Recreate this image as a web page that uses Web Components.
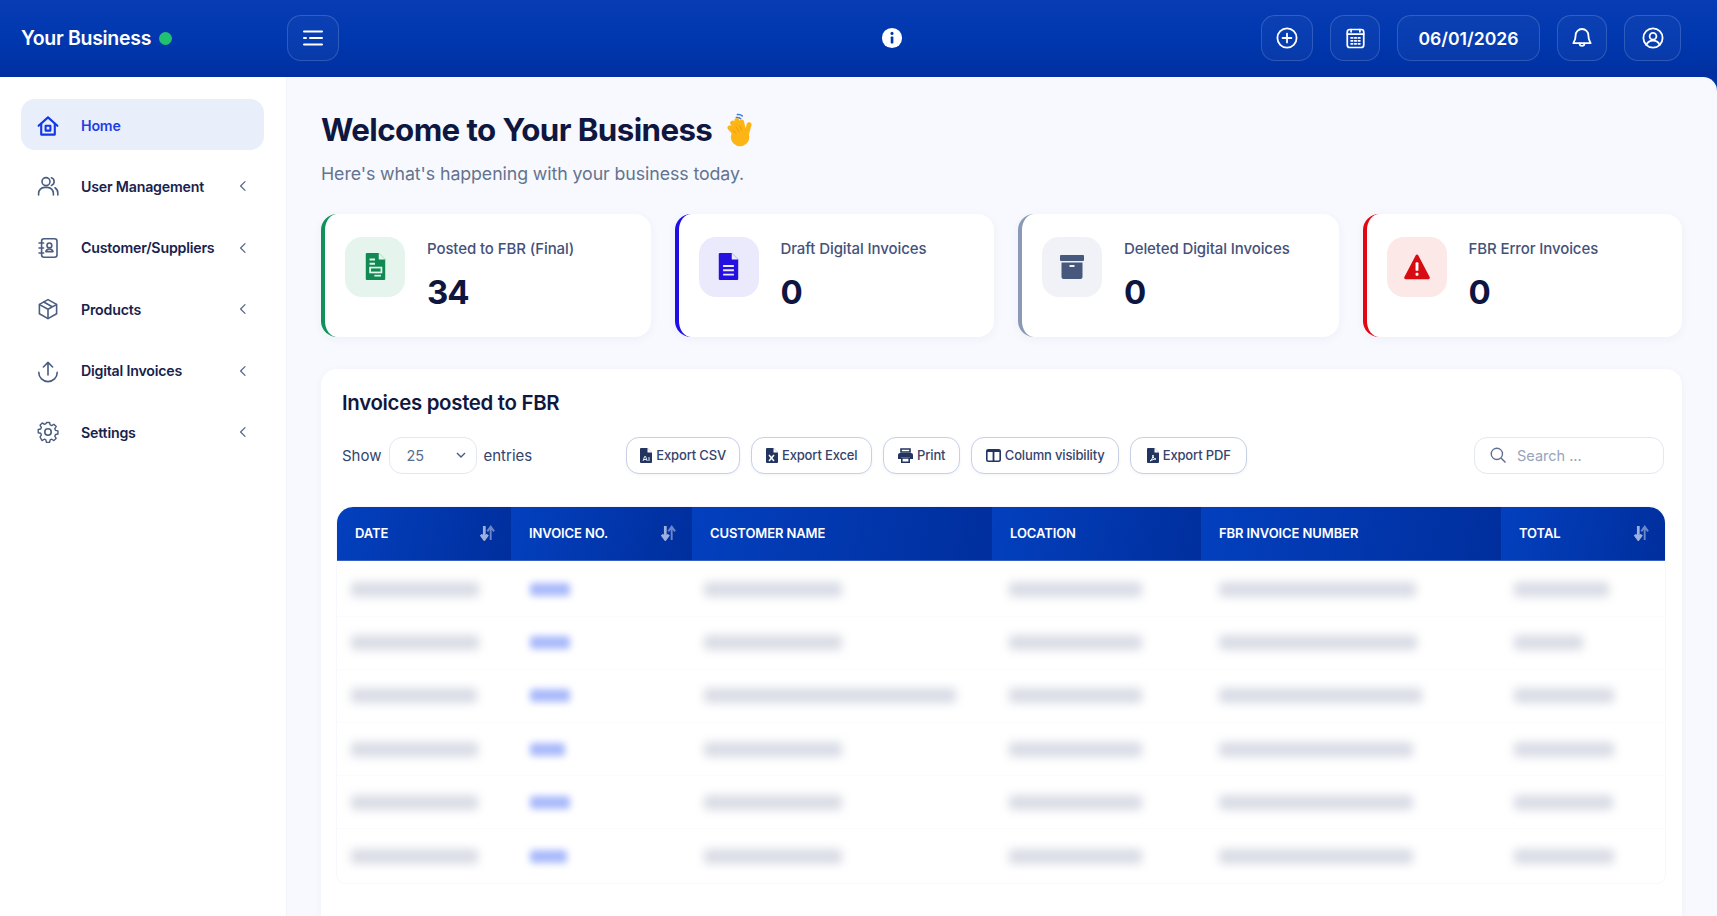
<!doctype html>
<html>
<head>
<meta charset="utf-8">
<title>Your Business</title>
<style>
  html, body { margin: 0; height: 100%; overflow: hidden; background: #fff; }
  body { font-family: "Inter", "Liberation Sans", sans-serif; color: #111a44; }
  app-shell { height: 916px; }
</style>
</head>
<body>
<app-shell>
  <app-header slot="header"></app-header>
  <side-nav slot="nav">
    <nav-item icon="home" active>Home</nav-item>
    <nav-item icon="users" more>User Management</nav-item>
    <nav-item icon="book" more>Customer/Suppliers</nav-item>
    <nav-item icon="box" more>Products</nav-item>
    <nav-item icon="upload" more>Digital Invoices</nav-item>
    <nav-item icon="gear" more>Settings</nav-item>
  </side-nav>
  <welcome-head></welcome-head>
  <stat-row>
    <stat-card kind="green" label="Posted to FBR (Final)" value="34"></stat-card>
    <stat-card kind="blue" label="Draft Digital Invoices" value="0"></stat-card>
    <stat-card kind="slate" label="Deleted Digital Invoices" value="0"></stat-card>
    <stat-card kind="red" label="FBR Error Invoices" value="0"></stat-card>
  </stat-row>
  <invoice-panel></invoice-panel>
</app-shell>

<script>
const ICONS = {
  home: '<path d="M2.6 11.8 12 3.4l9.4 8.4"/><path d="M5.2 9.8V20.6h13.600V9.800"/><rect x="9.600" y="11.800" width="4.800" height="4.800"/>',
  users: '<circle cx="10" cy="7.600" r="4"/><path d="M2.600 21v-1.600a6 6 0 0 1 6-6h2.800a6 6 0 0 1 6 6V21"/><path d="M15.400 3.800a4 4 0 0 1 0 7.600"/><path d="M19 13.800a6 6 0 0 1 2.800 5.200V21"/>',
  book: '<rect x="5.600" y="2.800" width="15.400" height="18.400" rx="2.400"/><path d="M3 7h4.600M3 12h4.600M3 17h4.600"/><circle cx="13.400" cy="9.400" r="2.400"/><path d="M9.800 15.600c.6-1.800 2-2.600 3.600-2.600s3 .8 3.600 2.600z"/>',
  box: '<path d="M12 2.600 20.600 7.400v9.400L12 21.600 3.400 16.800V7.400z"/><path d="M3.600 7.600 12 12.200l8.400-4.600M12 12.200v9.200M7.800 5l8.400 4.800"/>',
  upload: '<path d="M12 16V3.400M7.400 8 12 3.400 16.600 8"/><path d="M2.800 13.400a9.200 9.200 0 0 0 18.400 0"/>',
  gear: '<circle cx="12" cy="12" r="3.200"/><path d="M10.200 2.600h3.600l.6 2.800 1.900.8 2.400-1.600 2.600 2.600-1.600 2.400.8 1.900 2.800.6v3.600l-2.800.6-.8 1.900 1.600 2.400-2.600 2.600-2.400-1.600-1.900.8-.6 2.800h-3.600l-.6-2.800-1.900-.8-2.400 1.600L2.900 19.100l1.600-2.400-.8-1.900-2.800-.6v-3.600l2.800-.6.8-1.900-1.600-2.400 2.600-2.600 2.400 1.600 1.900-.8z" transform="translate(12 12) scale(.88) translate(-12 -13.400)"/>',
  menu: '<path d="M3 5.400h18M9 12h12M3 18.600h18M3 12h2"/>',
  plus: '<circle cx="12" cy="12" r="9.600"/><path d="M12 7.600v8.800M7.600 12h8.800"/>',
  calc: '<rect x="3.400" y="2.600" width="17.200" height="18.800" rx="2.600"/><path d="M3.400 7.400h17.200" /><path d="M7.400 11.400h1.600M11.200 11.400h1.600M15 11.400h1.600M7.400 14.400h1.600M11.200 14.400h1.600M15 14.400h1.600M7.400 17.600h1.600M11.200 17.600h1.600M15 17.600h1.600" stroke-width="1.800"/><path d="M7.400 2.600V5M16.600 2.600V5"/>',
  bell: '<path d="M12 3a6.400 6.400 0 0 0-6.400 6.400c0 5.200-2.200 7-2.200 7.800h17.200c0-.8-2.200-2.600-2.200-7.800A6.400 6.400 0 0 0 12 3z"/><path d="M9.600 17.400a2.400 2.400 0 0 0 4.800 0"/>',
  user: '<circle cx="12" cy="12" r="9.600"/><circle cx="12" cy="10.200" r="3.400"/><path d="M5.400 19c1-3 3.600-4.400 6.600-4.400s5.600 1.400 6.600 4.400"/>',
  chev: '<path d="M15 5.400 8.400 12l6.600 6.600"/>'
};
const svg = (name, size, width = 1.8) =>
  `<svg width="${size}" height="${size}" viewBox="0 0 24 24" fill="none" stroke="currentColor" stroke-width="${width}" stroke-linecap="round" stroke-linejoin="round">${ICONS[name]}</svg>`;

customElements.define('app-shell', class extends HTMLElement {
  constructor() {
    super();
    this.attachShadow({ mode: 'open' }).innerHTML = `<style>
      :host { display: grid; grid-template: 77px 1fr / 286px 1fr; background: #0032a4; }
      .head { grid-column: 1 / 3; }
      .nav { background: #fff; min-height: 0; }
      main { background: #f7f9fe; padding: 35px 35px 0 34px; border-top-right-radius: 14px; border-left: 1px solid #f0f3fa; overflow: hidden; min-height: 0; box-sizing: border-box; }
    </style>
    <div class="head"><slot name="header"></slot></div>
    <div class="nav"><slot name="nav"></slot></div>
    <main><slot></slot></main>`;
  }
});

customElements.define('head-button', class extends HTMLElement {
  constructor() {
    super();
    this.attachShadow({ mode: 'open' }).innerHTML = `<style>
      :host { display: flex; align-items: center; justify-content: center; height: 46px; box-sizing: border-box;
        border: 1px solid rgba(255,255,255,.16); border-radius: 14px; background: rgba(255,255,255,.03);
        color: #fff; font-size: 17.600px; font-weight: 600; }
    </style><slot></slot>`;
  }
});

customElements.define('app-header', class extends HTMLElement {
  constructor() {
    super();
    this.attachShadow({ mode: 'open' }).innerHTML = `<style>
      :host { display: flex; align-items: center; height: 77px; box-sizing: border-box;
        background: linear-gradient(180deg,#073cb4 0%,#0037ae 55%,#0030a0 100%); color: #fff; padding: 0 36px 1px 21px; }
      .brand { display: flex; align-items: center; width: 266px; font-size: 19.500px; font-weight: 600; letter-spacing: -.3px; }
      .dot { width: 13px; height: 13px; border-radius: 50%; background: #22c16f; margin-left: 8px; }
      .mid { flex: 1; display: flex; justify-content: center; padding-left: 184px; }
      .right { display: flex; gap: 17px; }
    </style>
    <div class="brand">Your Business<span class="dot"></span></div>
    <head-button style="width:52px">${svg('menu', 24, 2)}</head-button>
    <div class="mid"><svg width="22" height="22" viewBox="0 0 24 24"><circle cx="12" cy="12" r="11" fill="#fff"/><rect x="10.600" y="10.400" width="2.900" height="7.600" rx=".8" fill="#0037af"/><circle cx="12" cy="7" r="1.700" fill="#0037af"/></svg></div>
    <div class="right">
      <head-button style="width:52px">${svg('plus', 24)}</head-button>
      <head-button style="width:50px">${svg('calc', 23)}</head-button>
      <head-button style="width:143px">06/01/2026</head-button>
      <head-button style="width:50px">${svg('bell', 24)}</head-button>
      <head-button style="width:57px">${svg('user', 24)}</head-button>
    </div>`;
  }
});

customElements.define('side-nav', class extends HTMLElement {
  constructor() {
    super();
    this.attachShadow({ mode: 'open' }).innerHTML = `<style>
      :host { display: flex; flex-direction: column; gap: 10.600px; padding: 22px 22px 0 21px; }
    </style><slot></slot>`;
  }
});

customElements.define('nav-item', class extends HTMLElement {
  constructor() {
    super();
    const active = this.hasAttribute('active');
    this.attachShadow({ mode: 'open' }).innerHTML = `<style>
      :host { display: flex; align-items: center; height: 51px; box-sizing: border-box; border-radius: 14px; padding: 0 13px 0 15px;
        font-size: 14.200px; font-weight: 600; letter-spacing: -.2px; color: #17224d; }
      :host([active]) { background: #e9eefb; color: #1c3fe6; padding-top: 2px; }
      .ico { display: flex; width: 24px; margin-right: 21px; color: #4a5c80; }
      :host([active]) .ico { color: #1337e8; }
      .txt { flex: 1; }
      .chev { display: flex; color: #5a6c8e; }
    </style>
    <span class="ico">${svg(this.getAttribute('icon'), 24, active ? 2.1 : 1.6)}</span>
    <span class="txt"><slot></slot></span>
    ${this.hasAttribute('more') ? `<span class="chev">${svg('chev', 16, 2)}</span>` : ''}`;
  }
});

customElements.define('welcome-head', class extends HTMLElement {
  constructor() {
    super();
    this.attachShadow({ mode: 'open' }).innerHTML = `<style>
      :host { display: block; }
      h1 { margin: 0; font-size: 31.300px; line-height: 36px; font-weight: 700; letter-spacing: -.6px; color: #0f1740; display: flex; align-items: center; gap: 14px; }
      p { margin: 12.500px 0 0; font-size: 17.800px; line-height: 26px; color: #64738f; font-weight: 400; letter-spacing: -.1px; }
    </style>
    <h1>Welcome to Your Business
      <svg width="26" height="34" viewBox="0 0 24 32" fill="none" stroke-linecap="round">
        <path d="M10.500 1.500a5 5 0 0 1 4.500 1.200M9.500 4.300a5 5 0 0 1 4 1" stroke="#3f7fe8" stroke-width="1.500"/>
        <g stroke="#fdb515" stroke-width="4.600"><path d="M9 20 3.500 14M10.500 17 6 9.500M13 15.500 10 7M16 15.500 14.500 8.500M18.500 22 21.500 11"/></g>
        <circle cx="13" cy="22.500" r="8.700" fill="#fdb515"/>
        <path d="M6.500 16.500 9 19M9.500 13.500l2.500 4M13 12l1.500 4" stroke="#e8960b" stroke-width=".8"/>
      </svg>
    </h1>
    <p>Here's what's happening with your business today.</p>`;
  }
});

customElements.define('stat-row', class extends HTMLElement {
  constructor() {
    super();
    this.attachShadow({ mode: 'open' }).innerHTML = `<style>
      :host { display: grid; grid-template-columns: 329fr 319fr 320fr 319fr; gap: 24px; margin-top: 27px; }
    </style><slot></slot>`;
  }
});

const STAT = {
  green: { c: '#0f9158', bg: '#e5f5ee', w: 21, h: 27, vb: '3 2 18 25', i: '<path d="M4 2h11l6 6v18a1 1 0 0 1-1 1H4a1 1 0 0 1-1-1V3a1 1 0 0 1 1-1z" fill="#0f8a52"/><path d="M15 2v6h6" fill="#e5f5ee"/><path d="M6.500 8h5M6.500 12h5" stroke="#e5f5ee" stroke-width="1.800"/><rect x="7" y="15.500" width="10.500" height="4.500" fill="none" stroke="#e5f5ee" stroke-width="1.600"/><path d="M11 23h6" stroke="#e5f5ee" stroke-width="1.600"/>' },
  blue: { c: '#1f0fe6', bg: '#ebeafc', w: 21, h: 27, vb: '3 2 18 25', i: '<path d="M4 2h11l6 6v18a1 1 0 0 1-1 1H4a1 1 0 0 1-1-1V3a1 1 0 0 1 1-1z" fill="#2410e0"/><path d="M15 2v6h6" fill="#ebeafc"/><path d="M7 14h10M7 18h10M7 22h10" stroke="#ebeafc" stroke-width="1.800"/>' },
  slate: { c: '#8a9ab5', bg: '#f0f2f7', w: 26, h: 24, vb: '0 3 24 24', i: '<rect x="0" y="3" width="24" height="6" rx="1" fill="#46587c"/><path d="M1.500 10.500h21V25a2 2 0 0 1-2 2h-17a2 2 0 0 1-2-2z" fill="#46587c"/><rect x="9.500" y="13" width="5" height="2" fill="#f0f2f7"/>' },
  red: { c: '#e30613', bg: '#fde8e8', w: 28, h: 26, vb: '0 1 27 27', i: '<path d="M13.500 1.500a1.500 1.500 0 0 1 1.300.8L26.600 24.800a1.600 1.600 0 0 1-1.400 2.400H1.800a1.600 1.600 0 0 1-1.400-2.400L12.200 2.300a1.500 1.500 0 0 1 1.300-.8z" fill="#d80a12"/><rect x="12" y="9.500" width="3" height="9" rx="1" fill="#fff"/><rect x="12" y="20.500" width="3" height="3" rx="1" fill="#fff"/>' }
};

customElements.define('stat-card', class extends HTMLElement {
  constructor() {
    super();
    const s = STAT[this.getAttribute('kind')];
    this.attachShadow({ mode: 'open' }).innerHTML = `<style>
      :host { display: flex; height: 123px; box-sizing: border-box; background: #fff; border-radius: 16px;
        border-left: 4px solid ${s.c}; padding: 23px 20px 0 20px; gap: 22px; box-shadow: 0 2px 10px rgba(40,60,120,.05); }
      .box { width: 60px; height: 60px; border-radius: 17px; background: ${s.bg}; display: flex; align-items: center; justify-content: center; }
      .lbl { font-size: 15px; line-height: 20px; font-weight: 500; color: #44527a; margin-top: 2px; letter-spacing: -.1px; }
      .val { font-size: 33px; line-height: 42px; font-weight: 700; color: #0e1640; margin-top: 12px; letter-spacing: -1px; }
    </style>
    <div class="box"><svg width="${s.w}" height="${s.h}" viewBox="${s.vb}">${s.i}</svg></div>
    <div><div class="lbl">${this.getAttribute('label')}</div><div class="val">${this.getAttribute('value')}</div></div>`;
  }
});

customElements.define('tool-button', class extends HTMLElement {
  constructor() {
    super();
    this.attachShadow({ mode: 'open' }).innerHTML = `<style>
      :host { display: flex; align-items: center; justify-content: center; gap: 4px; height: 37px; box-sizing: border-box;
        border: 1px solid #c7d0e4; border-radius: 13px; background: #fff; font-size: 13px; font-weight: 500; color: #34446c;
        box-shadow: 0 1px 3px rgba(40,60,120,.06); letter-spacing: -.15px; }
    </style>
    <slot name="icon"></slot><slot></slot>`;
  }
});

// the row data in the reference is blurred out, so it is drawn as smears and not as text
const ROWS = [
  [128, 40, 138, 133, 197, 95],
  [128, 40, 138, 133, 198, 69],
  [126, 40, 252, 133, 203, 100],
  [127, 35, 138, 133, 194, 100],
  [127, 40, 138, 133, 194, 99],
  [127, 37, 138, 133, 194, 100]
];
const COLS = [
  { w: 174, name: 'DATE', sort: 1, pad: 14 },
  { w: 181, name: 'INVOICE NO.', sort: 1, pad: 19 },
  { w: 300, name: 'CUSTOMER NAME', pad: 12 },
  { w: 209, name: 'LOCATION', pad: 17 },
  { w: 300, name: 'FBR INVOICE NUMBER', pad: 18 },
  { w: 164, name: 'TOTAL', sort: 1, pad: 13 }
];
const fileIcon = mark => `<svg slot="icon" width="12" height="15" viewBox="0 0 12 15"><path d="M1 0h6.500L12 4.500V14a1 1 0 0 1-1 1H1a1 1 0 0 1-1-1V1a1 1 0 0 1 1-1z" fill="#22345f"/><path d="M7.500 0v4.500H12" fill="#fff"/>${mark}</svg>`;

customElements.define('invoice-panel', class extends HTMLElement {
  constructor() {
    super();
    const head = COLS.map(c => `<div class="th" style="width:${c.w}px">${c.name}${c.sort ? `<svg width="17" height="16" viewBox="0 0 16 15"><path d="M5 1v11M1.800 9 5 13.400 8.200 9" fill="none" stroke="#fff" stroke-width="2.600" opacity=".62"/><path d="M11 14V3M7.800 6 11 1.600 14.200 6" fill="none" stroke="#fff" stroke-width="1.800" opacity=".42"/></svg>` : ''}</div>`).join('');
    const body = ROWS.map(r => `<div class="tr">${r.map((w, i) => `<div class="td" style="width:${COLS[i].w}px;padding-left:${COLS[i].pad}px"><span class="smear${i === 1 ? ' link' : ''}" style="width:${w}px"></span></div>`).join('')}</div>`).join('');
    this.attachShadow({ mode: 'open' }).innerHTML = `<style>
      :host { display: block; margin-top: 32px; background: #fff; border-radius: 16px; padding: 0 17px 0 16px; height: 560px;
        box-shadow: 0 2px 10px rgba(40,60,120,.04); }
      h2 { margin: 0; padding: 21px 0 0 5px; font-size: 20.400px; line-height: 26px; font-weight: 600; letter-spacing: -.3px; color: #10183f; }
      .bar { display: flex; align-items: center; height: 37px; margin-top: 21px; padding-left: 5px; font-size: 15px; color: #35446a; }
      .sel { display: flex; align-items: center; justify-content: space-between; width: 88px; height: 37px; box-sizing: border-box; margin: 0 7px 0 7px;
        border: 1px solid #e2e7f2; border-radius: 13px; padding: 0 9px 0 17px; color: #5d6d8e; font-size: 14.500px; }
      .tools { display: flex; gap: 11px; margin-left: 94px; }
      .search { display: flex; align-items: center; gap: 10px; width: 190px; height: 37px; box-sizing: border-box; margin-left: auto; margin-right: 1px;
        border: 1px solid #e3e7f2; border-radius: 13px; padding: 0 14px; color: #98a3bc; font-size: 14.500px; }
      .search svg { color: #5e6e8e; }
      .table { margin-top: 33px; border-radius: 16px 16px 8px 8px; box-shadow: 0 0 0 1px #f7f8fb; }
      .thead { display: flex; height: 54px; overflow: hidden; border-radius: 16px 16px 0 0; border-bottom: 1px solid #3a62c4; box-sizing: border-box; margin-bottom: 3px; }
      .th { display: flex; align-items: center; justify-content: space-between; box-sizing: border-box; padding: 0 15px 0 18px;
        background: linear-gradient(105deg,#0340be 0%,#002e9d 100%); color: #fff; font-size: 13px; font-weight: 600; letter-spacing: -.1px; }
      .tr { display: flex; height: 53.200px; align-items: center; border-bottom: 1px solid #fbfbfd; box-sizing: border-box; }
      .tr:last-child { border-bottom: 0; }
      .td { box-sizing: border-box; display: flex; }
      .smear { height: 15px; border-radius: 3px; background: #d9dce5; filter: blur(5px); }
      .smear.link { height: 13px; background: #a8b9fb; filter: blur(3.500px); }
    </style>
    <h2>Invoices posted to FBR</h2>
    <div class="bar">
      <span>Show</span>
      <div class="sel"><span>25</span><svg width="12" height="12" viewBox="0 0 12 12"><path d="M2 4l4 4 4-4" fill="none" stroke="#4a5c80" stroke-width="1.400"/></svg></div>
      <span>entries</span>
      <div class="tools">
        <tool-button style="width:114px">${fileIcon('<path d="M3 13l1.600-4.500h1L7.200 13M4 11.500h2.400M9 9v4" stroke="#fff" stroke-width=".9" fill="none"/>')}Export CSV</tool-button>
        <tool-button style="width:121px">${fileIcon('<path d="M3 7l5 6M8 7l-5 6" stroke="#fff" stroke-width="1.500"/>')}Export Excel</tool-button>
        <tool-button style="width:77px"><svg slot="icon" width="15" height="15" viewBox="0 0 15 15"><path d="M3 1h9v3H3z" fill="none" stroke="#22345f" stroke-width="1.600"/><path d="M2 5h11a2 2 0 0 1 2 2v4h-3V9H3v2H0V7a2 2 0 0 1 2-2z" fill="#22345f"/><path d="M3.800 10h7.400v4.200H3.800z" fill="none" stroke="#22345f" stroke-width="1.600"/></svg>Print</tool-button>
        <tool-button style="width:148px"><svg slot="icon" width="15" height="13" viewBox="0 0 15 13"><rect x=".8" y=".8" width="13.400" height="11.400" rx="1.500" fill="none" stroke="#22345f" stroke-width="1.600"/><path d="M.8 2h13.400M7.500 1v11" stroke="#22345f" stroke-width="1.800"/></svg>Column visibility</tool-button>
        <tool-button style="width:117px">${fileIcon('<path d="M3 13c2-1 3-4 3-6 0 3 1 4 3 4-2 0-4 1-6 2z" stroke="#fff" stroke-width="1" fill="none"/>')}Export PDF</tool-button>
      </div>
      <div class="search"><svg width="18" height="18" viewBox="0 0 24 24" fill="none" stroke="currentColor" stroke-width="1.800"><circle cx="10.500" cy="10.500" r="7.500"/><path d="M16 16l6 6"/></svg>Search ...</div>
    </div>
    <div class="table">
      <div class="thead">${head}</div>
      ${body}
    </div>`;
  }
});
</script>
</body>
</html>
